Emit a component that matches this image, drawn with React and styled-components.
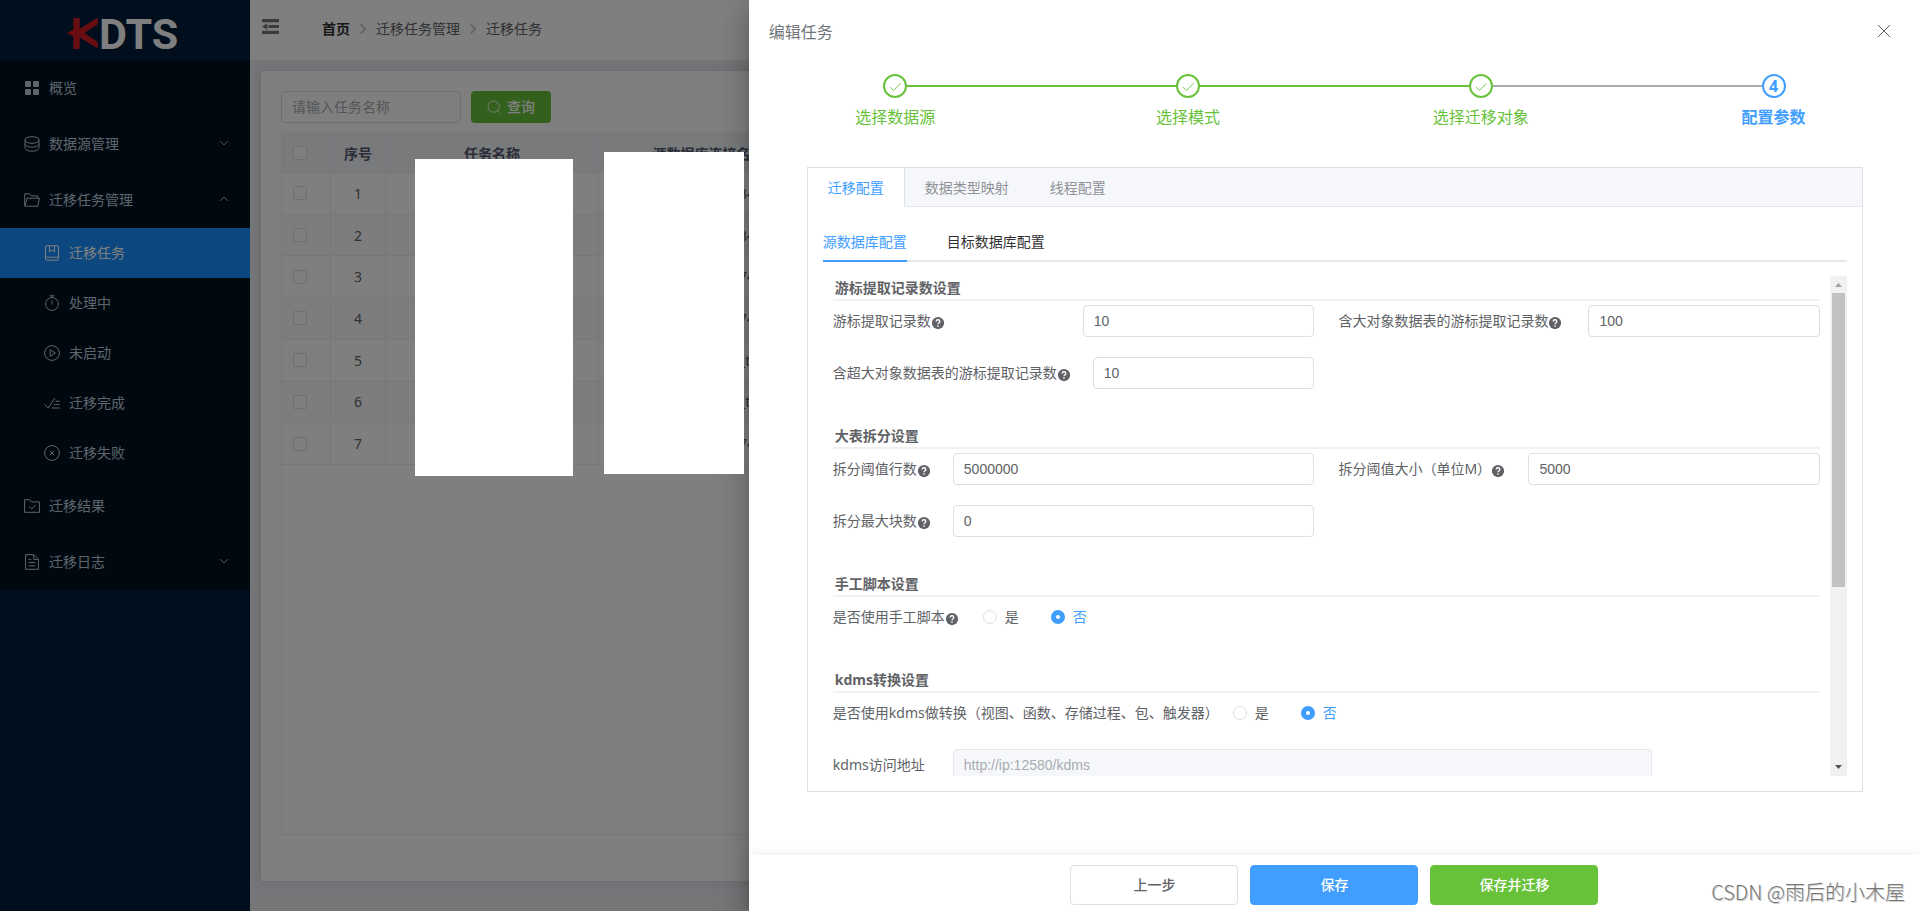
import { useState } from "react";
import styled, { createGlobalStyle } from "styled-components";

const menuItems = [
  { icon: "grid", text: "概览" },
  { icon: "coin", text: "数据源管理", arrow: "down" },
  {
    icon: "folderOpened",
    text: "迁移任务管理",
    arrow: "up",
    children: [
      { icon: "collection", text: "迁移任务", active: true },
      { icon: "stopwatch", text: "处理中" },
      { icon: "play", text: "未启动" },
      { icon: "finished", text: "迁移完成" },
      { icon: "circleClose", text: "迁移失败" },
    ],
  },
  { icon: "folderChecked", text: "迁移结果" },
  { icon: "document", text: "迁移日志", arrow: "down" },
];

const rows = ["34", "34", "74", "74", "_t", "_t", "74"];

const steps = [
  { title: "选择数据源", status: "finish" },
  { title: "选择模式", status: "finish" },
  { title: "选择迁移对象", status: "finish", wait: true },
  { title: "配置参数", status: "process" },
];

const stepColors = { finish: "#67c23a", process: "#409eff", wait: "#a6abb2" };

const icons = {
  grid: (
    <g fill="currentColor" stroke="none">
      <rect x="1" y="1" width="6" height="6" rx="1" />
      <rect x="9" y="1" width="6" height="6" rx="1" />
      <rect x="1" y="9" width="6" height="6" rx="1" />
      <rect x="9" y="9" width="6" height="6" rx="1" />
    </g>
  ),
  coin: (
    <>
      <ellipse cx="8" cy="4" rx="7" ry="3.3" />
      <path d="M1 4v7.5C1 13.6 4 15.2 8 15.2s7-1.600 7-3.700V4" />
      <path d="M1 7.700c0 2 3 3.400 7 3.400s7-1.400 7-3.400" />
    </>
  ),
  folderOpened: (
    <>
      <path d="M.7 14.2V1.8h4.8l1.8 2.1h6.4v2.3" />
      <path d="M.9 14.2 3 6.2h12.4l-1.6 8z" />
    </>
  ),
  collection: (
    <>
      <path d="M1.5 13.8V2.2c0-.9.5-1.4 1.4-1.4h10.2c.8 0 1.4.5 1.4 1.4v11.6c0 .8-.6 1.4-1.4 1.4H2.9c-.9 0-1.4-.6-1.4-1.4 0-1 .5-1.6 1.4-1.6h11.6" />
      <path d="M5.5.8v6L8 4.9l2.5 1.9v-6" />
    </>
  ),
  stopwatch: (
    <>
      <circle cx="8" cy="9" r="6.4" />
      <path d="M8 5.5v4M5.500.8h5M8 .8v2" />
    </>
  ),
  play: (
    <>
      <circle cx="8" cy="8" r="7.4" />
      <path d="M6.2 4.8v6.4L11.4 8z" />
    </>
  ),
  finished: <path d="M.4 9.3 4.2 13 11 3M11.5 6.2h4.2M9.8 9.6h5.9M7.5 13h8.2" />,
  circleClose: (
    <>
      <circle cx="8" cy="8" r="7.4" />
      <path d="m5.8 5.8 4.4 4.4m0-4.4-4.4 4.4" />
    </>
  ),
  folderChecked: (
    <>
      <path d="M.6 14.3V1.7h4.9l1.9 2.2h8v10.4z" />
      <path d="m5.2 8.5 2.5 2.3 4-3.8" />
    </>
  ),
  document: (
    <>
      <path d="M1.6.7h8.5l4.3 4.4v10.2H1.6z" />
      <path d="M9.8.9v4.5h4.4M4.6 5.4h2.6M4.6 8.5h6.8M4.6 11.8h6.8" />
    </>
  ),
  down: <path d="m3.6 5.8 4.4 4.4 4.4-4.4" />,
  up: <path d="m3.6 10.2 4.4-4.4 4.4 4.4" />,
  right: <path d="m5.4 2.8 5 5.2-5 5.2" />,
  search: (
    <>
      <circle cx="7.6" cy="7.6" r="6.4" />
      <path d="m12.2 12.2 2.4 2.4" />
    </>
  ),
  check: <path d="m2.5 9.300 3.800 3.800 8-8.200" />,
  close: <path d="m2 2 12 12M14 2 2 14" />,
  fold: (
    <g fill="currentColor" stroke="none">
      <path d="M0 1h16v3H0zM6 6.5h10v3H6zM0 12h16v3H0zM0 8l5-3v6z" />
    </g>
  ),
  question: (
    <>
      <circle cx="8" cy="8" r="7" fill="currentColor" stroke="none" />
      <path
        d="M5.9 6.3c0-1.2.9-2 2.1-2s2.1.8 2.1 1.9c0 1.4-2.1 1.5-2.1 3.1M8 10.6v1.6"
        stroke="#fff"
        strokeWidth="1.5"
      />
    </>
  ),
};

const Icon = ({ name, size = 16 }) => (
  <Svg viewBox="0 0 16 16" width={size} height={size} aria-hidden="true">
    {icons[name]}
  </Svg>
);

const Sidebar = () => (
  <Aside>
    <Logo>
      <svg viewBox="0 0 31 33" width="31" height="33" aria-hidden="true">
        <path
          fill="#d01c26"
          d="M6.3 1h6.4v10.700L30.700.6v6.600L17.500 16l13.200 9v6.600L12.700 20.500v11.500H6.300V19.500L0 16l6.300-3.500z"
        />
      </svg>
      <span>DTS</span>
    </Logo>
    <Menu>
      {menuItems.map((item) => (
        <li key={item.text}>
          <MenuLink href="#">
            <MenuIcon>
              <Icon name={item.icon} />
            </MenuIcon>
            <Caption>{item.text}</Caption>
            {item.arrow && (
              <MenuArrow>
                <Icon name={item.arrow} size={14} />
              </MenuArrow>
            )}
          </MenuLink>
          {item.children && (
            <ul>
              {item.children.map((child) => (
                <li key={child.text}>
                  <MenuLink href="#" $sub $active={child.active}>
                    <MenuIcon>
                      <Icon name={child.icon} />
                    </MenuIcon>
                    <Caption>{child.text}</Caption>
                  </MenuLink>
                </li>
              ))}
            </ul>
          )}
        </li>
      ))}
    </Menu>
  </Aside>
);

const TaskList = () => (
  <Card>
    <Toolbar>
      <SearchInput placeholder="请输入任务名称" aria-label="任务名称" />
      <SearchButton type="button">
        <Icon name="search" size={14} />
        <Caption>查询</Caption>
      </SearchButton>
    </Toolbar>
    <TableBox>
      <Table>
        <colgroup>
          <Col $width={49} />
          <Col $width={55} />
          <Col $width={213} />
          <Col $width={220} />
          <col />
        </colgroup>
        <thead>
          <tr>
            <th>
              <Checkbox type="checkbox" aria-label="全选" />
            </th>
            <th>序号</th>
            <th>任务名称</th>
            <th>源数据库连接名称</th>
            <th />
          </tr>
        </thead>
        <tbody>
          {rows.map((name, index) => (
            <tr key={index}>
              <td>
                <Checkbox type="checkbox" aria-label={`选择 ${index + 1}`} />
              </td>
              <td>{index + 1}</td>
              <td />
              <NameCell>{name}</NameCell>
              <td />
            </tr>
          ))}
        </tbody>
      </Table>
    </TableBox>
  </Card>
);

const Field = ({ id, label, labelWidth, help, ...rest }) => (
  <FormItem>
    <Label htmlFor={id} $width={labelWidth}>
      {label}
      {help && <Icon name="question" size={14} />}
    </Label>
    <Input id={id} {...rest} />
  </FormItem>
);

const YesNo = ({ id, label, labelWidth, help }) => {
  const [value, setValue] = useState("否");
  return (
    <FormItem role="radiogroup" aria-labelledby={id}>
      <Label as="span" id={id} $width={labelWidth}>
        {label}
        {help && <Icon name="question" size={14} />}
      </Label>
      {["是", "否"].map((option) => (
        <RadioLabel key={option} $checked={value === option}>
          <Radio
            type="radio"
            name={id}
            checked={value === option}
            onChange={() => setValue(option)}
          />
          <Caption>{option}</Caption>
        </RadioLabel>
      ))}
    </FormItem>
  );
};

const ConfigForm = () => (
  <Form>
    <Section>
      <SectionTitle>游标提取记录数设置</SectionTitle>
      <FormGrid>
        <Field id="fetch" label="游标提取记录数" labelWidth={250} help defaultValue="10" />
        <Field id="lobFetch" label="含大对象数据表的游标提取记录数" labelWidth={250} help defaultValue="100" />
        <Field id="bigLobFetch" label="含超大对象数据表的游标提取记录数" labelWidth={260} help defaultValue="10" />
      </FormGrid>
    </Section>
    <Section>
      <SectionTitle>大表拆分设置</SectionTitle>
      <FormGrid>
        <Field id="splitRows" label="拆分阈值行数" labelWidth={120} help defaultValue="5000000" />
        <Field id="splitSize" label="拆分阈值大小（单位M）" labelWidth={190} help defaultValue="5000" />
        <Field id="splitMax" label="拆分最大块数" labelWidth={120} help defaultValue="0" />
      </FormGrid>
    </Section>
    <Section>
      <SectionTitle>手工脚本设置</SectionTitle>
      <YesNo id="script" label="是否使用手工脚本" labelWidth={150} help />
    </Section>
    <Section>
      <SectionTitle>kdms转换设置</SectionTitle>
      <YesNo
        id="kdms"
        label="是否使用kdms做转换（视图、函数、存储过程、包、触发器）"
        labelWidth={400}
      />
      <WideRow>
        <Field
          id="kdmsUrl"
          label="kdms访问地址"
          labelWidth={120}
          placeholder="http://ip:12580/kdms"
          disabled
        />
      </WideRow>
    </Section>
  </Form>
);

const EditDrawer = () => (
  <Drawer role="dialog" aria-label="编辑任务">
    <DrawerHeader>
      <span>编辑任务</span>
      <CloseButton type="button" aria-label="关闭">
        <Icon name="close" size={16} />
      </CloseButton>
    </DrawerHeader>
    <Steps>
      {steps.map((step, index) => {
        const prev = steps[index - 1];
        return (
          <Step key={step.title} $status={step.status}>
            <StepHead>
              <StepLine $color={prev && stepColors[prev.wait ? "wait" : "finish"]} />
              <StepCircle>
                {step.status === "finish" ? <Icon name="check" size={14} /> : index + 1}
              </StepCircle>
              <StepLine
                $color={index < 3 && stepColors[step.wait ? "wait" : "finish"]}
              />
            </StepHead>
            {step.title}
          </Step>
        );
      })}
    </Steps>
    <Tabs>
      <TabsHeader>
        <Tab type="button" $active>
          迁移配置
        </Tab>
        <Tab type="button">数据类型映射</Tab>
        <Tab type="button">线程配置</Tab>
      </TabsHeader>
      <TabsBody>
        <SubTabs>
          <SubTab type="button" $active>
            源数据库配置
          </SubTab>
          <SubTab type="button">目标数据库配置</SubTab>
        </SubTabs>
        <ScrollArea>
          <ConfigForm />
          <ScrollBar aria-hidden="true">
            <ScrollArrow viewBox="0 0 17 17" $color="#a3a3a3">
              <path d="M8.5 7 12 11H5z" />
            </ScrollArrow>
            <ScrollTrack>
              <ScrollThumb />
            </ScrollTrack>
            <ScrollArrow viewBox="0 0 17 17" $color="#505050">
              <path d="M5 6h7l-3.5 4z" />
            </ScrollArrow>
          </ScrollBar>
        </ScrollArea>
      </TabsBody>
    </Tabs>
    <Footer>
      <FooterButton type="button">上一步</FooterButton>
      <FooterButton type="button" $color="#409eff">
        保存
      </FooterButton>
      <FooterButton type="button" $color="#67c23a">
        保存并迁移
      </FooterButton>
    </Footer>
    <Watermark>CSDN @雨后的小木屋</Watermark>
  </Drawer>
);

const App = () => (
  <>
    <GlobalStyle />
    <Layout>
      <Sidebar />
      <Main>
        <Header>
          <FoldButton type="button" aria-label="收起菜单">
            <Icon name="fold" size={17} />
          </FoldButton>
          <Breadcrumb>
            <a href="#">首页</a>
            <Icon name="right" size={14} />
            <Caption>迁移任务管理</Caption>
            <Icon name="right" size={14} />
            <Caption>迁移任务</Caption>
          </Breadcrumb>
        </Header>
        <Content>
          <TaskList />
        </Content>
      </Main>
      <Overlay />
      <EditDrawer />
      <Mask $left={415} $top={159} $width={158} $height={317} />
      <Mask $left={604} $top={152} $width={140} $height={322} />
    </Layout>
  </>
);

const GlobalStyle = createGlobalStyle`
  * {
    box-sizing: border-box;
  }

  body {
    margin: 0;
    font-family: "Noto Sans", "Noto Sans CJK SC", sans-serif;
    font-size: 14px;
    color: #606266;
  }

  button,
  input {
    font-family: inherit;
    font-size: 14px;
  }

  button {
    padding: 0;
    border: none;
    background: none;
    cursor: pointer;
  }

  a {
    color: inherit;
    text-decoration: none;
  }

  ul {
    margin: 0;
    padding: 0;
    list-style: none;
  }
`;

const Svg = styled.svg`
  flex: none;
  fill: none;
  stroke: currentColor;
  stroke-width: 1;
`;

/* text that sits next to an icon, lifted to its optical centre */
const Caption = styled.span`
  padding-bottom: 2px;
`;

const Layout = styled.div`
  position: relative;
  display: flex;
  height: 100vh;
  overflow: hidden;
`;

const Aside = styled.aside`
  flex: none;
  width: 250px;
  background-color: #001c3c;
`;

const Logo = styled.div`
  display: flex;
  align-items: center;
  gap: 1px;
  height: 60px;
  padding: 8px 0 0 67px;
  color: #fff;

  svg {
    margin-bottom: 2px;
  }

  span {
    font-family: Roboto, sans-serif;
    font-size: 43px;
    font-weight: 700;
    line-height: 52px;
  }
`;

const Menu = styled.ul`
  background-color: #001020;
`;

const MenuLink = styled.a`
  display: flex;
  align-items: center;
  height: ${({ $sub }) => ($sub ? "50px" : "56px")};
  padding: 0 19px 0 ${({ $sub }) => ($sub ? "40px" : "20px")};
  color: ${({ $active }) => ($active ? "#fff" : "#bfcbd9")};
  background-color: ${({ $active }) => ($active ? "#1890ff" : "transparent")};
`;

const MenuIcon = styled.span`
  display: flex;
  justify-content: center;
  width: 24px;
  margin-right: 5px;
`;

const MenuArrow = styled.span`
  display: flex;
  margin-left: auto;
  padding-bottom: 2px;
`;

const Main = styled.main`
  flex: 1;
  display: flex;
  flex-direction: column;
  min-width: 0;
  background-color: #eaecf1;
`;

const Header = styled.header`
  display: flex;
  align-items: center;
  height: 60px;
  padding: 0 12px;
  background-color: #fff;
`;

const FoldButton = styled.button`
  display: flex;
  margin: 0 43px 8px 0;
  color: #777;
`;

const Breadcrumb = styled.nav`
  display: flex;
  align-items: center;
  gap: 6px;
  padding-bottom: 2px;

  a {
    padding-bottom: 2px;
    font-weight: 700;
    color: #303133;
  }

  svg {
    color: #c0c4cc;
    stroke-width: 2;
  }
`;

const Content = styled.div`
  flex: 1;
  display: flex;
  padding: 11px 11px 30px;
`;

const Card = styled.section`
  flex: 1;
  display: flex;
  flex-direction: column;
  gap: 10px;
  min-width: 0;
  padding: 20px 20px 46px;
  border-radius: 4px 4px 0 0;
  background-color: #fff;
  box-shadow: 0 0 12px rgba(0, 0, 0, 0.12);
`;

const Toolbar = styled.div`
  display: flex;
  gap: 10px;
`;

const SearchInput = styled.input`
  width: 180px;
  height: 32px;
  padding: 0 10px 2px;
  border: 1px solid #dcdfe6;
  border-radius: 4px;

  &::placeholder {
    color: #a8abb2;
  }
`;

const SearchButton = styled.button`
  display: flex;
  align-items: center;
  justify-content: center;
  gap: 6px;
  width: 80px;
  height: 32px;
  border-radius: 4px;
  font-weight: 500;
  color: #fff;
  background-color: #67c23a;
`;

const TableBox = styled.div`
  flex: 1;
  border: 1px solid #ebeef5;
`;

const Table = styled.table`
  width: 100%;
  height: 331px;
  table-layout: fixed;
  border-collapse: separate;
  border-spacing: 0;
  text-align: center;

  th,
  td {
    padding: 0;
    border-right: 1px solid #ebeef5;
    border-bottom: 1px solid #ebeef5;
  }

  th {
    height: 39px;
    font-weight: 700;
    color: #515a6e;
    background-color: #f3f5f9;
  }

  th:first-child,
  td:first-child {
    padding-left: 11px;
    text-align: left;
  }

  tbody tr:nth-child(even) {
    background-color: #fafafa;
  }
`;

const Col = styled.col`
  width: ${({ $width }) => $width}px;
`;

const NameCell = styled.td`
  && {
    padding-left: 140px;
    text-align: left;
  }
`;

const Checkbox = styled.input`
  appearance: none;
  display: block;
  width: 14px;
  height: 14px;
  margin: 0;
  border: 1px solid #dcdfe6;
  border-radius: 2px;
  background-color: #fff;
`;

const Overlay = styled.div`
  position: absolute;
  inset: 0;
  background-color: rgba(0, 0, 0, 0.5);
`;

const Mask = styled.div`
  position: absolute;
  left: ${({ $left }) => $left}px;
  top: ${({ $top }) => $top}px;
  width: ${({ $width }) => $width}px;
  height: ${({ $height }) => $height}px;
  background-color: #fff;
`;

const Drawer = styled.div`
  position: absolute;
  top: 0;
  right: 0;
  bottom: 0;
  display: flex;
  flex-direction: column;
  width: 61%;
  background-color: #fff;
  box-shadow:
    0 8px 10px -5px rgba(0, 0, 0, 0.2),
    0 16px 24px 2px rgba(0, 0, 0, 0.14),
    0 6px 30px 5px rgba(0, 0, 0, 0.12);
`;

const DrawerHeader = styled.header`
  display: flex;
  align-items: center;
  justify-content: space-between;
  height: 62px;
  margin-bottom: 12px;
  padding: 0 28px 0 20px;
  font-size: 16px;
  color: #72767b;
`;

const CloseButton = styled.button`
  display: flex;
  color: #606266;
`;

const Steps = styled.div`
  display: flex;
  margin-bottom: 31px;
`;

const Step = styled.div`
  flex: 1;
  font-size: 16px;
  line-height: 38px;
  text-align: center;
  font-weight: ${({ $status }) => ($status === "process" ? 700 : 400)};
  color: ${({ $status }) => stepColors[$status]};
`;

const StepHead = styled.div`
  display: flex;
  align-items: center;
`;

const StepLine = styled.span`
  flex: 1;
  height: 2px;
  background-color: ${({ $color }) => $color || "transparent"};
`;

const StepCircle = styled.span`
  display: flex;
  align-items: center;
  justify-content: center;
  width: 24px;
  height: 24px;
  border: 2px solid currentColor;
  border-radius: 50%;
  line-height: 20px;
`;

const Tabs = styled.section`
  margin: 0 57px 0 58px;
  border: 1px solid #dcdfe6;
`;

const TabsHeader = styled.div`
  display: flex;
  height: 39px;
  border-bottom: 1px solid #e4e7ed;
  background-color: #f5f7fa;
`;

const Tab = styled.button`
  height: 39px;
  margin-left: -1px;
  padding: 0 20px 2px;
  border: 1px solid transparent;
  border-width: 0 1px;
  color: ${({ $active }) => ($active ? "#409eff" : "#909399")};
  background-color: ${({ $active }) => ($active ? "#fff" : "transparent")};
  border-color: ${({ $active }) => ($active ? "#dcdfe6" : "transparent")};
`;

const TabsBody = styled.div`
  padding: 15px;
`;

const SubTabs = styled.div`
  display: flex;
  gap: 40px;
  height: 40px;
  margin-bottom: 14px;
  border-bottom: 2px solid #e4e7ed;
`;

const SubTab = styled.button`
  height: 40px;
  border-bottom: 2px solid
    ${({ $active }) => ($active ? "#409eff" : "transparent")};
  color: ${({ $active }) => ($active ? "#409eff" : "#303133")};
`;

const ScrollArea = styled.div`
  display: flex;
  height: calc(100vh - 411px);
`;

const ScrollBar = styled.div`
  display: flex;
  flex-direction: column;
  width: 17px;
  background-color: #f1f1f1;
`;

const ScrollArrow = styled.svg`
  width: 17px;
  height: 17px;
  fill: ${({ $color }) => $color};
`;

const ScrollTrack = styled.div`
  flex: 1;
  padding: 0 2px;
`;

const ScrollThumb = styled.div`
  height: 63%;
  background-color: #c1c1c1;
`;

const Form = styled.form`
  flex: 1;
  min-width: 0;
  padding: 0 10px;
  overflow-y: auto;
  scrollbar-width: none;
`;

const Section = styled.section`
  display: flow-root;
  margin-bottom: 15px;
`;

const SectionTitle = styled.h4`
  height: 25px;
  margin: 0 0 4px;
  padding-left: 2px;
  border-bottom: 2px solid #f0f0f0;
  font-size: 14px;
  font-weight: 700;
  line-height: 23px;
`;

const FormGrid = styled.div`
  display: grid;
  grid-template-columns: 1fr 1fr;
  column-gap: 24px;
`;

const FormItem = styled.div`
  display: flex;
  align-items: center;
  height: 32px;
  margin-bottom: 20px;
`;

const WideRow = styled.div`
  width: 83%;
`;

const Label = styled.label`
  flex: none;
  width: ${({ $width }) => $width}px;
  line-height: 32px;
  white-space: nowrap;

  svg {
    vertical-align: -4px;
  }
`;

const Input = styled.input`
  flex: 1;
  min-width: 0;
  height: 32px;
  padding: 0 10px;
  border: 1px solid #dcdfe6;
  border-radius: 4px;
  font-family: "Liberation Sans", sans-serif;
  color: #606266;
  background-color: #fff;

  &:disabled {
    border-color: #e4e7ed;
    background-color: #f5f7fa;
  }

  &::placeholder {
    color: #a8abb2;
  }
`;

const RadioLabel = styled.label`
  display: flex;
  align-items: center;
  gap: 8px;
  margin-right: 32px;
  color: ${({ $checked }) => ($checked ? "#409eff" : "#606266")};
`;

const Radio = styled.input`
  appearance: none;
  width: 14px;
  height: 14px;
  margin: 0;
  border: 1px solid #dcdfe6;
  border-radius: 50%;
  background-color: #fff;

  &:checked {
    border: 5px solid #409eff;
  }
`;

const Footer = styled.footer`
  display: flex;
  justify-content: center;
  gap: 12px;
  height: 56px;
  margin-top: auto;
  padding-top: 10px;
  background-color: #fff;
  box-shadow: 0 0 12px rgba(0, 0, 0, 0.08);
`;

const FooterButton = styled.button`
  width: 168px;
  height: 40px;
  padding-bottom: 2px;
  border: 1px solid ${({ $color }) => $color || "#dcdfe6"};
  border-radius: 4px;
  font-weight: 500;
  color: ${({ $color }) => ($color ? "#fff" : "#606266")};
  background-color: ${({ $color }) => $color || "#fff"};
`;

const Watermark = styled.div`
  position: absolute;
  right: 15px;
  bottom: 4px;
  font-family: "Noto Sans CJK SC", sans-serif;
  font-size: 20px;
  font-weight: 300;
  line-height: 30px;
  color: #777;
  text-shadow: 1px 1px 0 #ccc;
`;

export default App;
